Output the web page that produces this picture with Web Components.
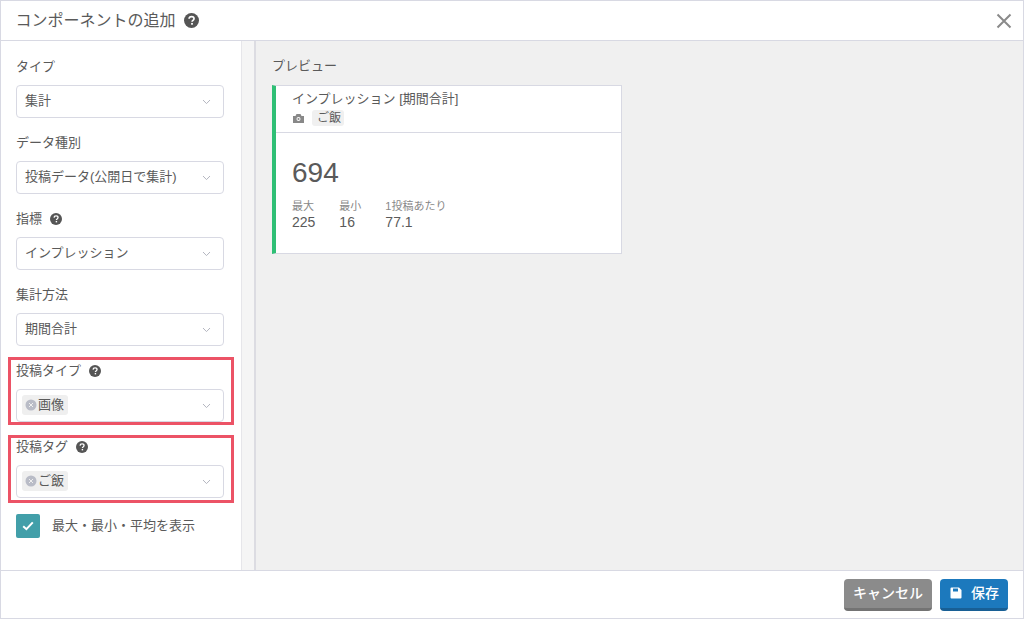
<!DOCTYPE html>
<html lang="ja">
<head>
<meta charset="utf-8">
<title>コンポーネントの追加</title>
<style>
  html, body { margin: 0; height: 100%; }
  body { font-family: "Liberation Sans", "Noto Sans CJK JP", sans-serif; color: #5a5a5a; }
</style>
</head>
<body>
<template id="help-tpl">
  <style>
    :host { display: inline-flex; width: var(--size, 12px); height: var(--size, 12px); }
    svg { width: 100%; height: 100%; display: block; }
  </style>
  <svg viewBox="0 0 16 16">
    <circle cx="8" cy="8" r="8" fill="#555"/>
    <path d="M5.4 6.2C5.5 4.7 6.6 3.8 8.1 3.8c1.5 0 2.6.9 2.6 2.2 0 1-.6 1.5-1.3 2-.6.4-.8.7-.8 1.4" fill="none" stroke="#fff" stroke-width="1.8"/>
    <rect x="7.6" y="10.6" width="1.9" height="1.9" fill="#fff"/>
  </svg>
</template>

<template id="chevron-tpl">
  <style>
    :host { display: inline-flex; }
    svg { width: 9px; height: 6px; display: block; }
  </style>
  <svg viewBox="0 0 9 6"><path d="M1 1l3.5 3.6L8 1" fill="none" stroke="#b4b6c0" stroke-width="1"/></svg>
</template>

<template id="select-tpl">
  <style>
    :host { display: flex; align-items: center; justify-content: space-between; box-sizing: border-box; height: 33px; padding: 0 12px 0 8px; background: #fff; border: 1px solid #d8d9e3; border-radius: 4px; font-size: 13px; color: #5a5a5a; }
    .value { display: flex; align-items: center; padding-bottom: 5px; }
  </style>
  <div class="value"><slot></slot></div>
  <x-chevron></x-chevron>
</template>

<template id="chip-tpl">
  <style>
    :host { display: inline-flex; align-items: center; gap: 1px; height: 20px; width: 46px; box-sizing: border-box; padding: 0 3px; margin: 0 0 -4px -3px; background: #efefef; border-radius: 3px; font-size: 13px; color: #5a5a5a; }
    svg { width: 12px; height: 12px; display: block; flex: none; }
    span { padding-bottom: 3px; }
  </style>
  <svg viewBox="0 0 12 12">
    <circle cx="6" cy="6" r="5.5" fill="#b9bcc7"/>
    <path d="M4 4l4 4M8 4l-4 4" stroke="#efefef" stroke-width="1"/>
  </svg>
  <span><slot></slot></span>
</template>

<template id="field-tpl">
  <style>
    :host { display: block; position: relative; box-sizing: border-box; height: 76px; padding-top: 1px; }
    .label { display: flex; align-items: center; gap: 8px; height: 20px; margin-bottom: 10px; font-size: 13px; color: #5a5a5a; }
    :host([marked])::after { content: ""; position: absolute; box-sizing: border-box; left: -8px; right: -10px; top: -1px; height: 68px; border: 3px solid #ec5366; pointer-events: none; }
    :host([marked="low"])::after { top: 1px; }
    ::slotted(x-help) { --size: 12px; margin-top: 4px; }
  </style>
  <div class="label"><slot name="label"></slot></div>
  <slot></slot>
</template>

<template id="check-tpl">
  <style>
    :host { display: flex; align-items: center; gap: 12px; margin-top: 4px; font-size: 13px; color: #5a5a5a; }
    .box { width: 24px; height: 24px; border-radius: 2px; background: #429fa9; display: flex; align-items: center; justify-content: center; }
    svg { width: 12px; height: 10px; display: block; }
    span { padding-bottom: 3px; }
  </style>
  <div class="box"><svg viewBox="0 0 12 10"><path d="M1.2 5.2l3.2 3L10.8 1.4" fill="none" stroke="#fff" stroke-width="2"/></svg></div>
  <span><slot></slot></span>
</template>

<template id="stat-tpl">
  <style>
    :host { display: flex; flex-direction: column; }
    .k { font-size: 11px; line-height: 14px; color: #888; }
    .v { font-size: 14px; line-height: 18px; color: #5a5a5a; }
  </style>
  <div class="k"><slot name="k"></slot></div>
  <div class="v"><slot></slot></div>
</template>

<template id="card-tpl">
  <style>
    :host { display: block; box-sizing: border-box; width: 350px; height: 169px; background: #fff; border: 1px solid #d8d9e3; border-left: 4px solid #2fbf75; }
    .head { box-sizing: border-box; height: 47px; padding: 5px 16px 0; border-bottom: 1px solid #d8d9e3; }
    .title { font-size: 13px; line-height: 15px; color: #5a5a5a; }
    .tags { display: flex; align-items: center; gap: 8px; margin: 4px 0 0 1px; }
    .tags svg { width: 11px; height: 9px; display: block; }
    .tag { font-size: 12px; line-height: 16px; padding: 0 3px 0 5px; background: #f0f0f0; border-radius: 3px; color: #5a5a5a; }
    .body { padding: 24px 16px 0; }
    .big { font-size: 28px; line-height: 32px; color: #5a5a5a; }
    .stats { display: flex; gap: 24px; margin-top: 10px; }
  </style>
  <div class="head">
    <div class="title"><slot name="title"></slot></div>
    <div class="tags">
      <svg viewBox="0 0 11 9">
        <path d="M0 2h2.5l1-2h4l1 2H11v7H0z" fill="#888"/>
        <circle cx="5.5" cy="5" r="2" fill="#fff"/>
        <circle cx="5.5" cy="5" r="1.1" fill="#888"/>
      </svg>
      <span class="tag"><slot name="tag"></slot></span>
    </div>
  </div>
  <div class="body">
    <div class="big"><slot name="value"></slot></div>
    <div class="stats"><slot></slot></div>
  </div>
</template>

<template id="button-tpl">
  <style>
    :host { display: inline-flex; align-items: center; justify-content: center; box-sizing: border-box; height: 32px; padding: 0 9px 2px; border-radius: 4px; font-size: 14px; font-weight: 500; color: #fff; background: #8b8b8b; border-bottom: 3px solid #737373; }
    :host([primary]) { background: #1c79bd; border-bottom-color: #185f95; }
  </style>
  <slot></slot>
</template>

<template id="dialog-tpl">
  <style>
    :host { display: flex; flex-direction: column; box-sizing: border-box; height: 619px; border: 1px solid #d8d9e3; background: #fff; overflow: hidden; }
    header { flex: none; box-sizing: border-box; height: 40px; display: flex; align-items: center; padding: 0 11px 0 14.5px; border-bottom: 1px solid #d8d9e3; }
    h1 { margin: 0; padding-bottom: 3px; font-size: 16px; font-weight: normal; color: #5a5a5a; }
    header x-help { --size: 15px; margin-left: 8.5px; }
    .close { margin-left: auto; width: 16px; height: 16px; display: block; }
    main { flex: 1; display: flex; min-height: 0; }
    .form { flex: none; box-sizing: border-box; width: 240px; padding: 13px 17px 0 15px; }
    .gutter { flex: none; width: 12px; background: #f5f5f5; border-left: 1px solid #e6e6ea; border-right: 2px solid #dcdce2; }
    .preview { flex: 1; background: #f0f0f0; padding: 15px 16px; }
    footer { flex: none; box-sizing: border-box; height: 48px; display: flex; align-items: center; justify-content: flex-end; gap: 8px; padding: 0 15px 0 0; border-top: 1px solid #d8d9e3; }
  </style>
  <header>
    <h1><slot name="title"></slot></h1>
    <x-help></x-help>
    <svg class="close" viewBox="0 0 16 16"><path d="M1.5 1.5l13 13M14.5 1.5l-13 13" stroke="#8a8a8a" stroke-width="2" fill="none"/></svg>
  </header>
  <main>
    <div class="form"><slot name="form"></slot></div>
    <div class="gutter"></div>
    <div class="preview"><slot name="preview"></slot></div>
  </main>
  <footer><slot name="actions"></slot></footer>
</template>

<x-dialog>
  <span slot="title">コンポーネントの追加</span>

  <div slot="form">
    <x-field><span slot="label">タイプ</span><x-select>集計</x-select></x-field>
    <x-field><span slot="label">データ種別</span><x-select>投稿データ(公開日で集計)</x-select></x-field>
    <x-field><span slot="label">指標</span><x-help slot="label"></x-help><x-select>インプレッション</x-select></x-field>
    <x-field><span slot="label">集計方法</span><x-select>期間合計</x-select></x-field>
    <x-field marked><span slot="label">投稿タイプ</span><x-help slot="label"></x-help><x-select><x-chip>画像</x-chip></x-select></x-field>
    <x-field marked="low"><span slot="label">投稿タグ</span><x-help slot="label"></x-help><x-select><x-chip>ご飯</x-chip></x-select></x-field>
    <x-check>最大・最小・平均を表示</x-check>
  </div>

  <div slot="preview" style="font-size:13px;color:#5a5a5a;line-height:20px;margin-bottom:9px">プレビュー</div>
  <x-card slot="preview">
    <span slot="title">インプレッション [期間合計]</span>
    <span slot="tag">ご飯</span>
    <span slot="value">694</span>
    <x-stat><span slot="k">最大</span>225</x-stat>
    <x-stat><span slot="k">最小</span>16</x-stat>
    <x-stat><span slot="k">1投稿あたり</span>77.1</x-stat>
  </x-card>

  <x-button slot="actions">キャンセル</x-button>
  <x-button slot="actions" primary style="padding-left:10px">
    <svg viewBox="0 0 12 12" style="width:12px;height:12px;margin:2px 9px 0 0"><path d="M1.5 0.5h7.5l2.5 2.5v7.5a1 1 0 0 1-1 1h-9a1 1 0 0 1-1-1v-9a1 1 0 0 1 1-1z" fill="#fff"/><rect x="3" y="1.5" width="5" height="3" fill="#1c79bd"/></svg>保存
  </x-button>
</x-dialog>

<script>
  // each element just clones its template into an open shadow root
  const define = (name, tpl) => {
    customElements.define(name, class extends HTMLElement {
      constructor() {
        super()
        this.attachShadow({ mode: 'open' })
        this.shadowRoot.appendChild(document.getElementById(tpl).content.cloneNode(true))
      }
    })
  }

  define('x-help', 'help-tpl')
  define('x-chevron', 'chevron-tpl')
  define('x-select', 'select-tpl')
  define('x-chip', 'chip-tpl')
  define('x-field', 'field-tpl')
  define('x-check', 'check-tpl')
  define('x-stat', 'stat-tpl')
  define('x-card', 'card-tpl')
  define('x-button', 'button-tpl')
  define('x-dialog', 'dialog-tpl')
</script>
</body>
</html>
